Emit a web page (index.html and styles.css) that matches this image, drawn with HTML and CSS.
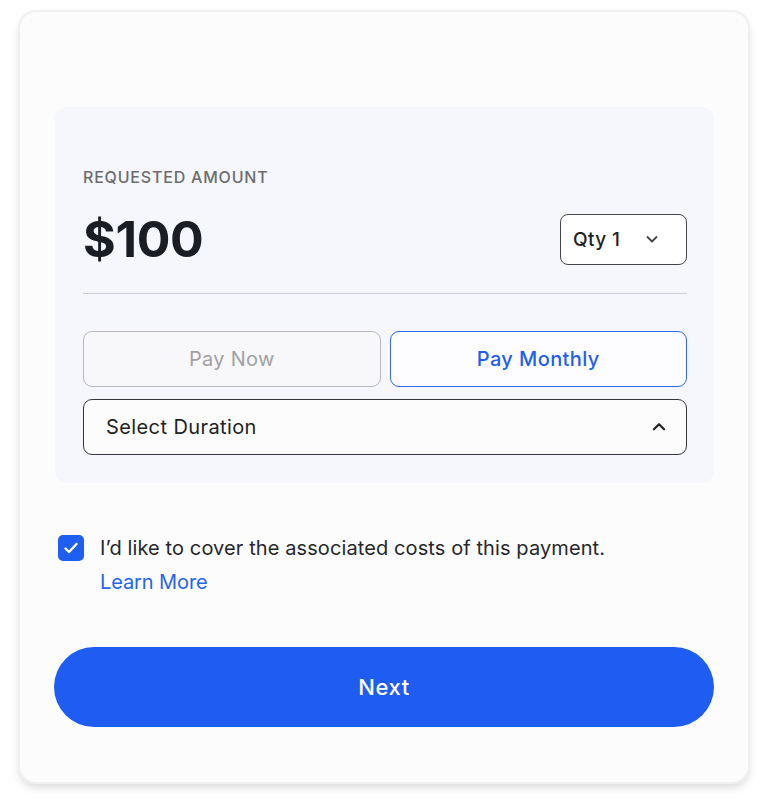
FILE: index.html
```html
<!DOCTYPE html>
<html lang="en">
<head>
    <meta charset="UTF-8">
    <meta name="viewport" content="width=device-width, initial-scale=1.0">
    <title>Payment</title>
    <link rel="stylesheet" href="styles.css">
</head>
<body>

<div class="card">
    <!-- Amount panel -->
    <div class="amount-panel">
        <div class="label">REQUESTED AMOUNT</div>
        <div class="amount-row">
            <div class="amount">$100</div>
            <button class="qty">
                Qty 1
                <svg width="16" height="16" viewBox="0 0 16 16"><path d="M3.5 6l4.5 4.5L12.5 6" fill="none" stroke="#444" stroke-width="1.8" stroke-linecap="round" stroke-linejoin="round"/></svg>
            </button>
        </div>
        <div class="divider"></div>

        <div class="pay-options">
            <button class="option">Pay Now</button>
            <button class="option active">Pay Monthly</button>
        </div>

        <div class="select">
            <span>Select Duration</span>
            <svg width="18" height="18" viewBox="0 0 16 16"><path d="M3.5 10l4.5-4.5L12.5 10" fill="none" stroke="#222" stroke-width="2" stroke-linecap="round" stroke-linejoin="round"/></svg>
        </div>
    </div>

    <!-- Cover costs -->
    <div class="cover">
        <div class="checkbox">
            <svg width="18" height="18" viewBox="0 0 18 18"><path d="M3.5 9.5l3.5 3.5 7.5-8" fill="none" stroke="#fff" stroke-width="2.4" stroke-linecap="round" stroke-linejoin="round"/></svg>
        </div>
        <div class="cover-text">
            <p>I’d like to cover the associated costs of this payment.</p>
            <a href="#">Learn More</a>
        </div>
    </div>

    <button class="next">Next</button>
</div>

</body>
</html>
```

FILE: styles.css
```css
body { font-family: Inter, "Noto Sans", sans-serif; background-color: #fff; margin: 0; padding: 12px 20px; }

.card {
    width: 728px;
    height: 770px;
    box-sizing: border-box;
    padding: 95px 34px 0 35px;
    background-color: #fcfcfd;
    border-radius: 16px;
    box-shadow: 0 0 0 2px #f0f0f0, 0 5px 10px rgba(0, 0, 0, 0.16);
}

/* Amount panel */
.amount-panel {
    background-color: #f6f7fc;
    border-radius: 12px;
    padding: 60px 27px 28px 28px;
}
.label { font-size: 16px; font-weight: 500; color: #6c6c70; letter-spacing: 0.8px; line-height: 20px; }
.amount-row { display: flex; justify-content: space-between; align-items: center; margin-top: 22px; }
.amount { font-size: 50px; font-weight: 700; color: #1b1d24; letter-spacing: -0.3px; line-height: 60px; }

.qty {
    display: flex;
    align-items: center;
    gap: 24px;
    width: 127px;
    height: 51px;
    padding: 0 0 0 12px;
    border: 1px solid #45464b;
    border-radius: 8px;
    background-color: #fff;
    font-family: inherit;
    font-size: 19px;
    font-weight: 500;
    letter-spacing: 0.4px;
    color: #222;
}

.divider { height: 1px; background-color: #cfcfd2; margin-top: 24px; }

.pay-options { display: flex; gap: 9px; margin-top: 37px; }
.option {
    flex: 1;
    height: 56px;
    border: 1px solid #b9b9bc;
    border-radius: 9px;
    background-color: #f8f8fa;
    font-family: inherit;
    font-size: 20px;
    letter-spacing: 0.3px;
    color: #a1a1a4;
}
.option.active { border-color: #2f66f2; color: #1f5ef2; background-color: #fdfdff; font-weight: 500; letter-spacing: 0.4px; }

.select {
    display: flex;
    justify-content: space-between;
    align-items: center;
    height: 56px;
    box-sizing: border-box;
    margin-top: 12px;
    padding: 0 18px 0 22px;
    border: 1px solid #35363a;
    border-radius: 9px;
    background-color: #fcfcfd;
    font-size: 20px;
    letter-spacing: 0.4px;
    color: #222;
}

/* Cover costs */
.cover { display: flex; gap: 16px; margin-top: 52px; padding-left: 3px; }
.checkbox {
    width: 26px;
    height: 26px;
    flex-shrink: 0;
    border-radius: 5px;
    background-color: #1f5ef2;
    display: flex;
    align-items: center;
    justify-content: center;
}
.cover-text p { margin: 0; font-size: 20px; letter-spacing: 0.1px; color: #26272b; line-height: 26px; }
.cover-text a { display: block; margin-top: 9px; font-size: 20px; letter-spacing: -0.1px; color: #2464f2; text-decoration: none; }

.next {
    display: block;
    width: 660px;
    height: 80px;
    margin: 53px 0 0 -1px;
    border: none;
    border-radius: 40px;
    background-color: #1f5cf2;
    color: #fff;
    font-family: inherit;
    font-size: 22px;
    font-weight: 500;
    letter-spacing: 0.6px;
}
```
